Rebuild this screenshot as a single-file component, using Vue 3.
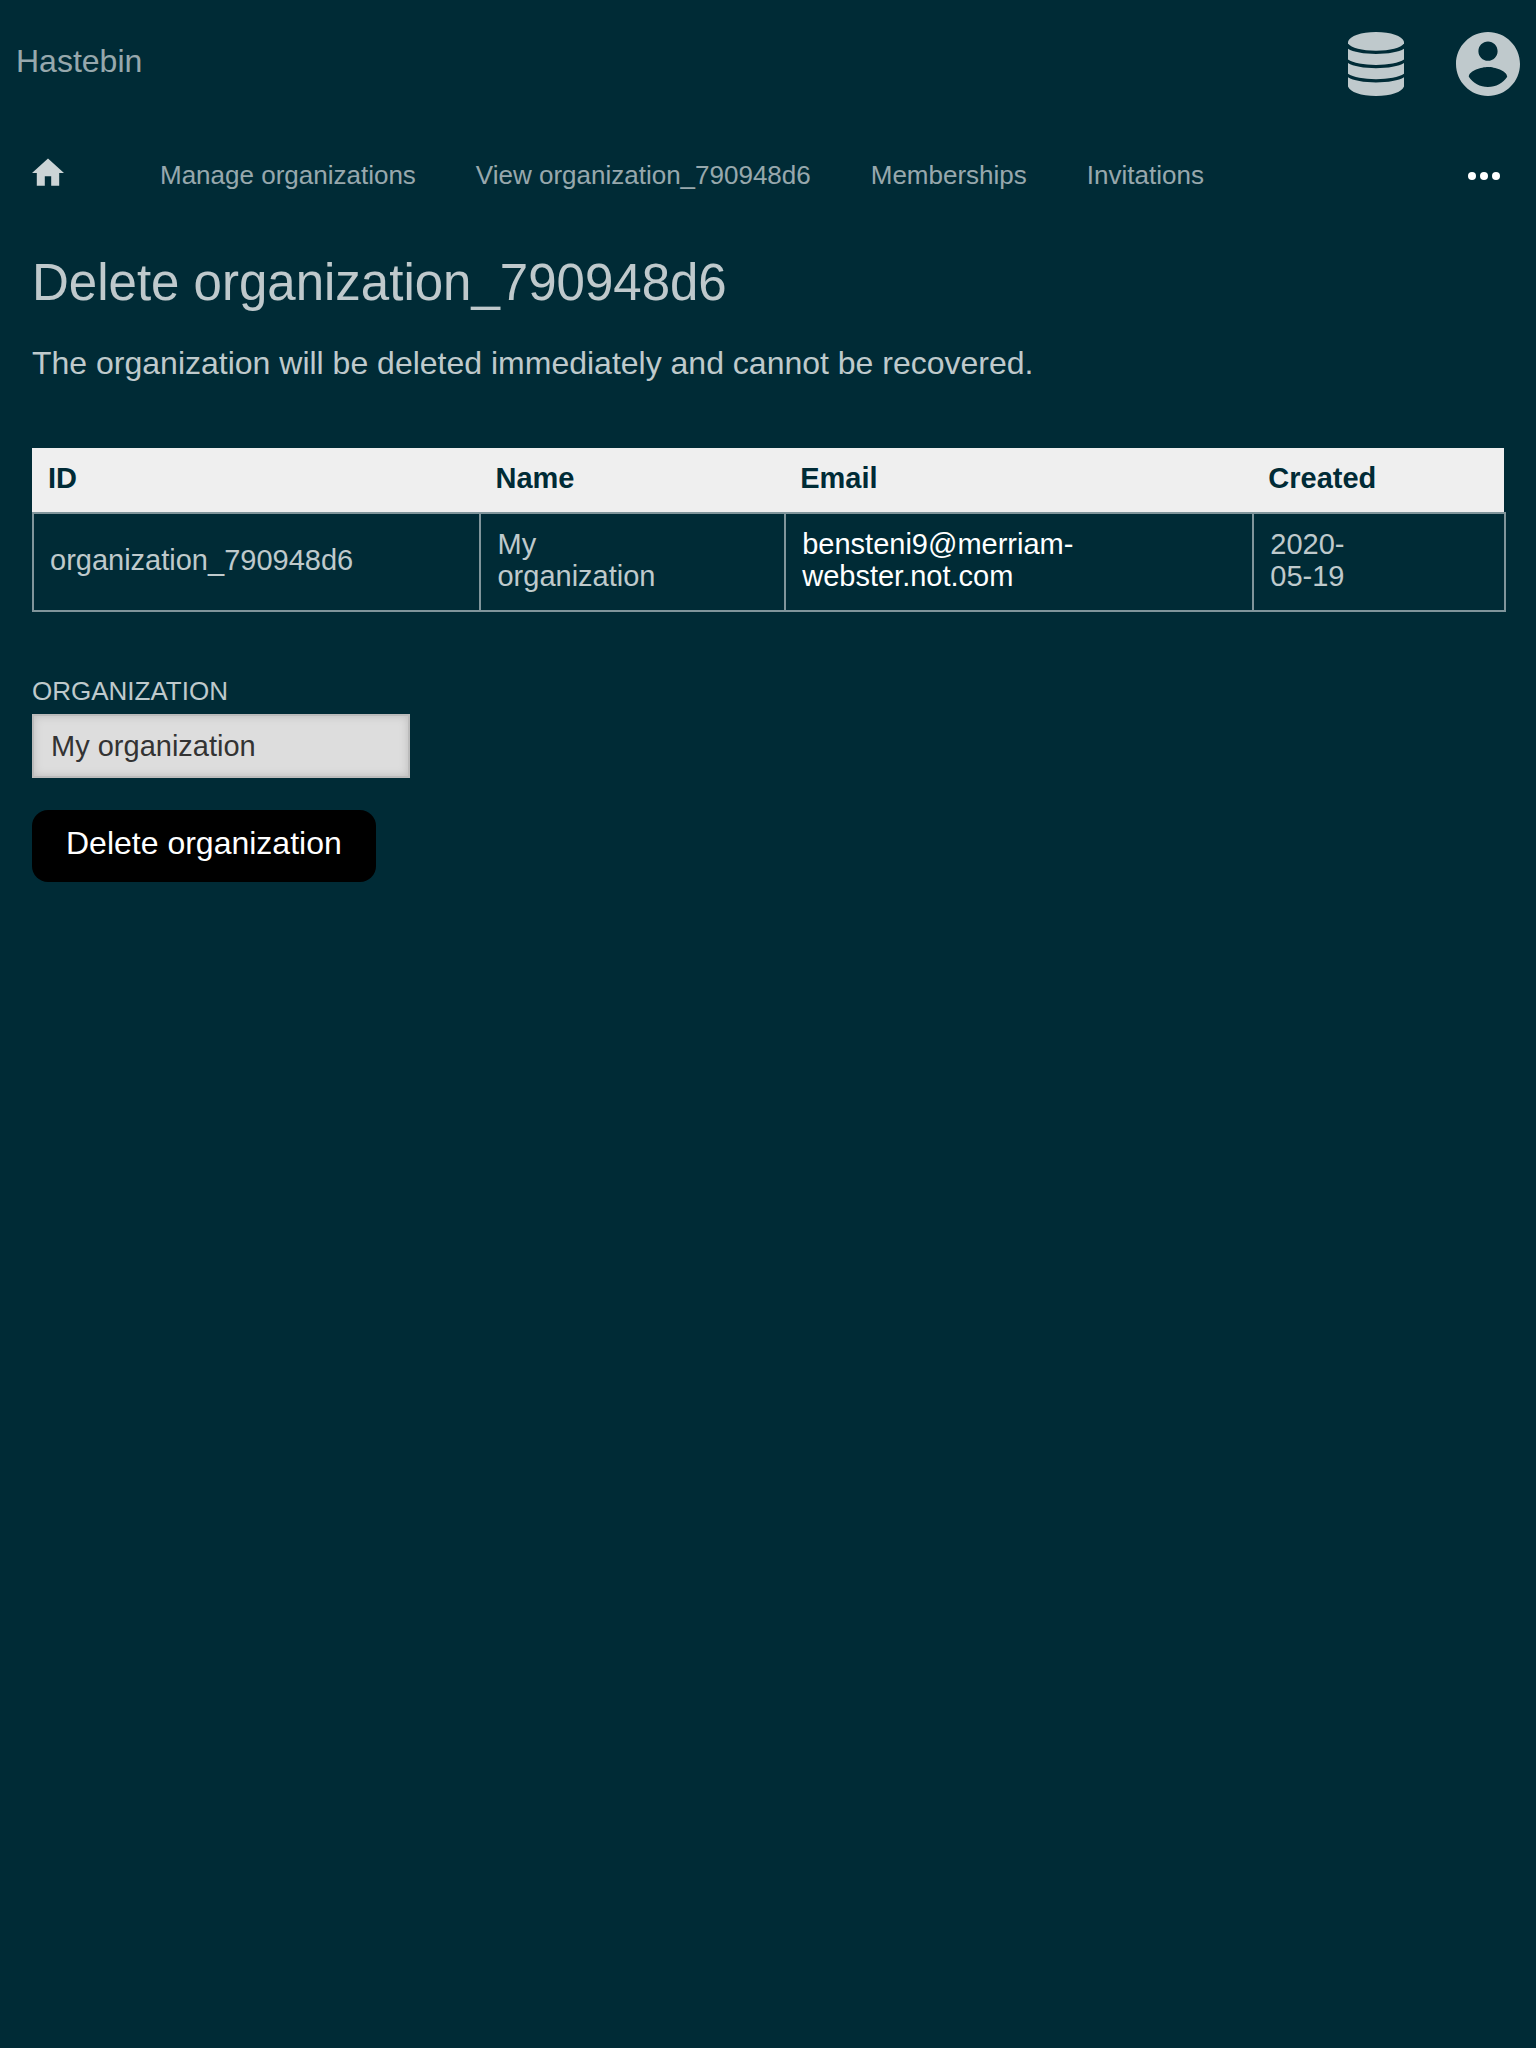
<script setup>
import { ref } from 'vue'

const links = ['Manage organizations', 'View organization_790948d6', 'Memberships', 'Invitations']
const organization = {
  id: 'organization_790948d6',
  name: 'My organization',
  email: 'bensteni9@merriam-webster.not.com',
  created: '2020-05-19',
}
const name = ref(organization.name)
</script>

<template>
  <div class="page">
    <header class="header">
      <a class="brand" href="#">Hastebin</a>
      <div class="menus">
        <button class="icon-button" type="button" aria-label="Administration">
          <svg width="56" height="64" viewBox="0 0 56 64" aria-hidden="true">
            <path d="M0 9.500C2 4 13 0 28 0s26 4 28 9.500v2C53 16 42 18.700 28 18.700S3 16 0 11.500z" />
            <path d="M0 16.700c5 3.300 16 5.200 28 5.200s23-1.900 28-5.200V27.500c-5 3.400-16 5.400-28 5.400s-23-2-28-5.400z" />
            <path d="M0 31c5 3.300 16 5.200 28 5.200S51 34.300 56 31V41.800c-5 3.400-16 5.400-28 5.400s-23-2-28-5.400z" />
            <path d="M0 45.300c5 3.300 16 5.200 28 5.200s23-1.900 28-5.200v9.200C54 60 43 64 28 64S2 60 0 54.500z" />
          </svg>
        </button>
        <button class="icon-button" type="button" aria-label="Account">
          <svg width="64" height="64" viewBox="2 2 20 20" aria-hidden="true">
            <path d="M12 2C6.480 2 2 6.480 2 12s4.480 10 10 10 10-4.480 10-10S17.520 2 12 2zm0 3c1.660 0 3 1.340 3 3s-1.340 3-3 3-3-1.340-3-3 1.340-3 3-3zm0 14.200c-2.500 0-4.710-1.280-6-3.220.030-1.990 4-3.080 6-3.080 1.990 0 5.970 1.090 6 3.080-1.290 1.940-3.500 3.220-6 3.220z" />
          </svg>
        </button>
      </div>
    </header>

    <nav class="nav">
      <a class="home" href="#" aria-label="Home">
        <svg width="32" height="32" viewBox="2 2 20 20" aria-hidden="true">
          <path d="M10 20v-6h4v6h5v-8h3L12 3 2 12h3v8z" />
        </svg>
      </a>
      <ul class="links">
        <li v-for="link in links" :key="link"><a href="#">{{ link }}</a></li>
      </ul>
      <button class="more" type="button" aria-label="More">
        <svg width="32" height="8" viewBox="0 0 32 8" aria-hidden="true">
          <circle cx="4" cy="4" r="4" />
          <circle cx="16" cy="4" r="4" />
          <circle cx="28" cy="4" r="4" />
        </svg>
      </button>
    </nav>

    <main class="content">
      <h1>Delete {{ organization.id }}</h1>
      <p>The organization will be deleted immediately and cannot be recovered.</p>

      <table>
        <colgroup>
          <col class="col-id" />
          <col class="col-name" />
          <col class="col-email" />
          <col class="col-created" />
        </colgroup>
        <thead>
          <tr>
            <th scope="col">ID</th>
            <th scope="col">Name</th>
            <th scope="col">Email</th>
            <th scope="col">Created</th>
          </tr>
        </thead>
        <tbody>
          <tr>
            <td>{{ organization.id }}</td>
            <td>{{ organization.name }}</td>
            <td><a :href="'mailto:' + organization.email">{{ organization.email }}</a></td>
            <td>{{ organization.created }}</td>
          </tr>
        </tbody>
      </table>

      <form class="form" @submit.prevent>
        <label for="organization-name">ORGANIZATION</label>
        <input id="organization-name" v-model="name" type="text" readonly />
        <button class="submit" type="submit">Delete organization</button>
      </form>
    </main>
  </div>
</template>

<style>
body {
  margin: 0;
  background: #002b36;
}
</style>

<style scoped>
.page {
  color: rgba(255, 255, 255, 0.75);
  font-family: "Liberation Sans", Arial, sans-serif;
  font-size: 32px;
}

a {
  text-decoration: none;
}

button {
  border: 0;
  padding: 0;
  background: none;
  font-family: inherit;
  cursor: pointer;
}

svg {
  display: block;
  fill: currentColor;
}

.header {
  display: flex;
  justify-content: space-between;
  align-items: flex-start;
  padding: 32px 16px;
}

.brand {
  color: rgba(255, 255, 255, 0.6);
  line-height: 58px;
}

.menus {
  display: flex;
  gap: 52px;
}

.icon-button {
  color: rgba(255, 255, 255, 0.75);
}

.nav {
  display: flex;
  align-items: center;
  min-height: 96px;
  padding: 0 36px 0 32px;
}

.home {
  padding-bottom: 6px;
  color: rgba(255, 255, 255, 0.8);
}

.links {
  display: flex;
  flex: 1;
  gap: 60px;
  margin: 0 0 0 96px;
  padding: 0 0 2px;
  list-style: none;
  font-size: 26px;
  line-height: 32px;
}

.links a {
  color: rgba(255, 255, 255, 0.6);
}

.more {
  color: #fff;
}

.content {
  padding: 0 32px;
}

h1 {
  margin: 0;
  padding: 27px 0;
  font-size: 51px;
  font-weight: 400;
  line-height: 64px;
}

p {
  margin: 0 0 64px;
  line-height: 42px;
}

table {
  width: 100%;
  border-spacing: 0;
  table-layout: fixed;
  font-size: 29px;
  line-height: 32px;
}

.col-id {
  width: 30.4%;
}

.col-name {
  width: 20.7%;
}

.col-email {
  width: 31.8%;
}

.col-created {
  width: 17.1%;
}

th {
  padding: 14px 16px 18px;
  background: #efefef;
  color: #002b36;
  text-align: left;
}

td {
  border: 2px solid rgba(255, 255, 255, 0.5);
  border-right: 0;
  padding: 14px 124px 18px 16px;
}

/* The closing line of the row sits just outside the last column. */
td:last-child {
  box-shadow: 2px 0 0 rgba(255, 255, 255, 0.5);
}

td a {
  color: #fff;
}

.form {
  display: flex;
  flex-direction: column;
  align-items: flex-start;
  padding-top: 62px;
}

label {
  padding-bottom: 6px;
  font-size: 26px;
  line-height: 34px;
}

input {
  box-sizing: border-box;
  width: 378px;
  max-width: 100%;
  height: 64px;
  margin: 0 0 32px;
  border: 2px solid #bbb;
  padding: 0 17px;
  background: #ddd;
  box-shadow: inset 0 0 8px #bbb;
  color: #333;
  font-family: inherit;
  font-size: 29px;
}

.submit {
  padding: 12px 34px 18px;
  border-radius: 16px;
  background: #000;
  color: #fff;
  font-size: 32px;
  line-height: 42px;
}
</style>
